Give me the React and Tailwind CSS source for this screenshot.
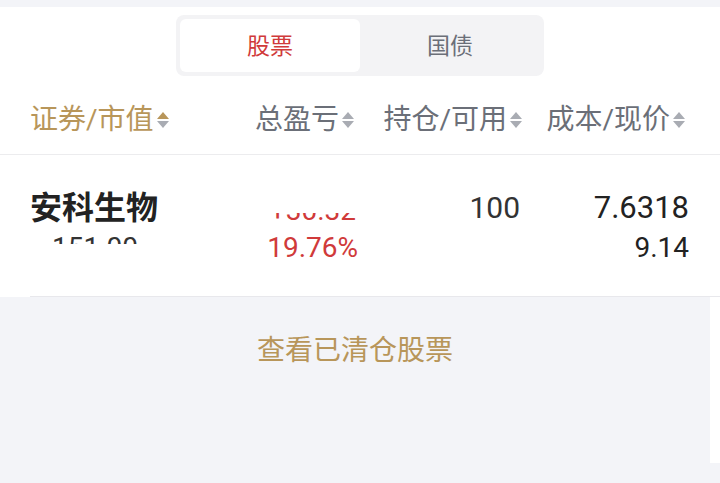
import { useState } from "react"

const FONT = { fontFamily: "Roboto, 'Noto Sans CJK SC', sans-serif" }

function SortIcon({ active }) {
  return (
    <span className="ml-[3px] inline-flex flex-col items-center gap-[2px]">
      <svg width="12" height="7" viewBox="0 0 12 7">
        <path d="M6 0 L12 7 L0 7 Z" fill={active ? "#b8965a" : "#a9acb3"} />
      </svg>
      <svg width="12" height="7" viewBox="0 0 12 7">
        <path d="M0 0 L12 0 L6 7 Z" fill="#a9acb3" />
      </svg>
    </span>
  )
}

function HeaderCell({ label, active, align = "right" }) {
  return (
    <div className={`flex items-center ${align === "right" ? "justify-end" : "justify-start"}`}>
      <span className={`text-[28px] leading-[36px] ${active ? "text-[#b8965a]" : "text-[#6b6f78]"}`}>{label}</span>
      <SortIcon active={active} />
    </div>
  )
}

export default function App() {
  const [tab, setTab] = useState("stock")

  return (
    <div className="w-[720px] h-[483px] bg-[#f3f4f8] flex flex-col overflow-hidden" style={FONT}>
      <div className="mt-[7px] bg-white">
        {/* tabs */}
        <div className="flex justify-center pt-[8px]">
          <div className="w-[368px] h-[61px] rounded-[8px] bg-[#f3f3f5] p-[4px] flex">
            <button
              onClick={() => setTab("stock")}
              className={`flex-1 rounded-[6px] text-[23px] pt-[3px] ${tab === "stock" ? "bg-white text-[#d03a3a]" : "text-[#6b6f78]"}`}
            >
              股票
            </button>
            <button
              onClick={() => setTab("bond")}
              className={`flex-1 rounded-[6px] text-[23px] pt-[3px] ${tab === "bond" ? "bg-white text-[#d03a3a]" : "text-[#6b6f78]"}`}
            >
              国债
            </button>
          </div>
        </div>

        {/* column headers */}
        <div className="grid grid-cols-[170px_154px_168px_1fr] items-center pl-[30px] pr-[35px] h-[79px] pt-[10px] border-b border-[#ececee]">
          <HeaderCell label="证券/市值" active align="left" />
          <HeaderCell label="总盈亏" />
          <HeaderCell label="持仓/可用" />
          <HeaderCell label="成本/现价" />
        </div>

        {/* row */}
        <div className="h-[141px] flex flex-col justify-center">
          <div className="grid grid-cols-[170px_158px_164px_1fr] pl-[30px] pr-[31px] pt-[2px]">
            <div className="flex flex-col">
              <span className="text-[32px] font-bold text-[#222] leading-[36px]">安科生物</span>
              <div className="h-[10px] overflow-hidden mt-[8px] pl-[22px]">
                <span className="text-[28px] leading-[30px] text-[#333] block -mt-[1px]">151.00</span>
              </div>
            </div>
            <div className="flex flex-col items-end">
              <div className="h-[36px] overflow-hidden flex items-end">
                <div className="h-[13px] overflow-hidden">
                  <span className="block text-[28px] leading-[30px] text-[#d03a3a] -mt-[17px] pr-[2px]">+30.32</span>
                </div>
              </div>
              <span className="text-[28px] leading-[30px] text-[#d03a3a] mt-[7px]">19.76%</span>
            </div>
            <div className="flex flex-col items-end">
              <div className="h-[22px] overflow-hidden pr-[2px] mt-[6px]">
                <span className="block text-[30px] leading-[36px] text-[#333] -mt-[6px]">100</span>
              </div>
            </div>
            <div className="flex flex-col items-end">
              <span className="text-[31px] leading-[36px] text-[#222]">7.6318</span>
              <span className="text-[28px] leading-[30px] text-[#222] mt-[7px]">9.14</span>
            </div>
          </div>
        </div>
      </div>

      {/* footer */}
      <div className="flex-1 flex flex-col">
        <div className="flex">
          <div className="w-[30px] bg-white" />
          <div className="flex-1 border-t border-[#e8e8ec]" />
        </div>
        <div className="flex h-[166px]">
          <div className="flex-1 flex justify-center pt-[36px]">
            <span className="text-[28px] text-[#b8965a] leading-[36px]">查看已清仓股票</span>
          </div>
          <div className="w-[10px] bg-white" />
        </div>
      </div>
    </div>
  )
}
